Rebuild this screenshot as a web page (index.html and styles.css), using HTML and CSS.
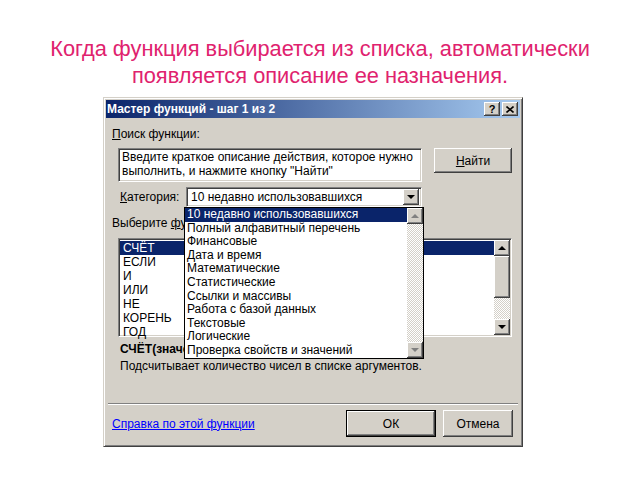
FILE: index.html
```html
<!DOCTYPE html>
<html lang="ru">
<head>
    <meta charset="UTF-8">
    <title>Мастер функций</title>
    <link rel="stylesheet" href="styles.css">
</head>
<body>
    <h1 class="caption">Когда функция выбирается из списка, автоматически<br>появляется описание ее назначения.</h1>

    <div class="dialog">
        <div class="titlebar">
            <span class="title">Мастер функций - шаг 1 из 2</span>
            <div class="tb-buttons">
                <span class="tb-btn tb-help">?</span>
                <span class="tb-btn">
                    <svg width="8" height="7" viewBox="0 0 8 7"><path d="M0.5 0.5 L7.5 6.5 M7.5 0.5 L0.5 6.5" stroke="#000" stroke-width="1.6"/></svg>
                </span>
            </div>
        </div>

        <div class="dlg-body">
            <div class="label"><u>П</u>оиск функции:</div>

            <div class="search-row">
                <div class="search-box field">Введите краткое описание действия, которое нужно<br>выполнить, и нажмите кнопку "Найти"</div>
                <button class="btn find-btn"><u>Н</u>айти</button>
            </div>

            <div class="category-row">
                <span class="cat-label"><u>К</u>атегория:</span>
                <div class="select field">
                    <span class="select-text">10 недавно использовавшихся</span>
                    <span class="sb-btn select-arrow"><i class="arrow-down"></i></span>
                </div>

                <!-- раскрытый список категорий -->
                <div class="dropdown">
                    <ul class="dd-items">
                        <li class="selected">10 недавно использовавшихся</li>
                        <li>Полный алфавитный перечень</li>
                        <li>Финансовые</li>
                        <li>Дата и время</li>
                        <li>Математические</li>
                        <li>Статистические</li>
                        <li>Ссылки и массивы</li>
                        <li>Работа с базой данных</li>
                        <li>Текстовые</li>
                        <li>Логические</li>
                        <li>Проверка свойств и значений</li>
                    </ul>
                    <div class="scrollbar">
                        <span class="sb-btn"><i class="arrow-up disabled"></i></span>
                        <span class="sb-track"></span>
                        <span class="sb-btn"><i class="arrow-down disabled"></i></span>
                    </div>
                </div>
            </div>

            <div class="label label-func">Выберите <u>ф</u>ункцию:</div>

            <div class="func-list field">
                <ul class="fl-items">
                    <li class="selected">СЧЁТ</li>
                    <li>ЕСЛИ</li>
                    <li>И</li>
                    <li>ИЛИ</li>
                    <li>НЕ</li>
                    <li>КОРЕНЬ</li>
                    <li>ГОД</li>
                </ul>
                <div class="scrollbar">
                    <span class="sb-btn"><i class="arrow-up"></i></span>
                    <span class="sb-thumb"></span>
                    <span class="sb-track"></span>
                    <span class="sb-btn"><i class="arrow-down"></i></span>
                </div>
            </div>

            <div class="signature">СЧЁТ(значение1;значение2;...)</div>
            <div class="description">Подсчитывает количество чисел в списке аргументов.</div>

            <div class="separator"></div>

            <div class="footer">
                <a class="help-link" href="#">Справка по этой функции</a>
                <button class="btn ok-btn">ОК</button>
                <button class="btn cancel-btn">Отмена</button>
            </div>
        </div>
    </div>
</body>
</html>
```

FILE: styles.css
```css
:root {
    --face: #d4d0c8;
    --shadow: #808080;
    --dark: #404040;
    --navy: #0a246a;
}

body {
    margin: 0;
    background: #fff;
    font-family: "Liberation Sans", Arial, sans-serif;
}

/* Подпись слайда */
.caption {
    margin: 0 0 8px;
    padding-top: 35px;
    text-align: center;
    font-weight: normal;
    font-size: 21.8px;
    line-height: 27px;
    color: #e0226e;
}

/* Окно диалога */
.dialog {
    margin-left: 103px;
    width: 420px;
    height: 350px;
    box-sizing: border-box;
    padding: 2px;
    background: var(--face);
    border: 1px solid;
    border-color: var(--face) var(--dark) var(--dark) var(--face);
    box-shadow: inset 1px 1px #fff, inset -1px -1px var(--shadow);
    font-size: 12px;
    color: #000;
}

.titlebar {
    height: 18px;
    display: flex;
    align-items: center;
    justify-content: space-between;
    padding: 0 2px 0 1px;
    background: linear-gradient(to right, var(--navy), #a6caf0);
}

.title {
    color: #fff;
    font-weight: bold;
    font-size: 12px;
}

.tb-buttons {
    display: flex;
    gap: 2px;
}

.tb-btn {
    width: 16px;
    height: 14px;
    display: flex;
    align-items: center;
    justify-content: center;
    background: var(--face);
    box-shadow: inset -1px -1px var(--dark), inset 1px 1px #fff, inset -2px -2px var(--shadow);
    font-size: 11px;
    font-weight: bold;
}

.dlg-body {
    padding: 10px 7px 0 6px;
}

.label {
    line-height: 13px;
}

/* Поля с вдавленной рамкой */
.field {
    box-sizing: border-box;
    background: #fff;
    border: 1px solid;
    border-color: var(--shadow) #fff #fff var(--shadow);
    box-shadow: inset 1px 1px var(--dark), inset -1px -1px var(--face);
}

.btn {
    box-sizing: border-box;
    background: var(--face);
    border: none;
    padding: 0;
    font-family: inherit;
    font-size: 12px;
    color: #000;
    box-shadow: inset -1px -1px var(--dark), inset 1px 1px #fff, inset -2px -2px var(--shadow);
}

.search-row {
    display: flex;
    align-items: flex-start;
    margin-top: 7px;
    padding-left: 6px;
}

.search-box {
    width: 304px;
    height: 34px;
    padding: 1px 3px;
    line-height: 14px;
}

.find-btn {
    width: 78px;
    height: 25px;
    margin-left: 12px;
}

.category-row {
    position: relative;
    display: flex;
    align-items: center;
    margin-top: 5px;
    height: 20px;
}

.cat-label {
    margin-left: 8px;
    width: 66px;
}

.select {
    width: 236px;
    height: 20px;
    display: flex;
    align-items: center;
    justify-content: space-between;
    padding: 2px;
}

.select-text {
    padding-left: 2px;
}

.select-arrow {
    height: 16px;
}

/* Раскрытый список */
.dropdown {
    position: absolute;
    left: 72px;
    top: 20px;
    width: 240px;
    height: 152px;
    box-sizing: border-box;
    display: flex;
    background: #fff;
    border: 1px solid #000;
    z-index: 2;
}

.dd-items,
.fl-items {
    flex: 1;
    margin: 0;
    padding: 0;
    list-style: none;
}

.dd-items li {
    line-height: 13.6px;
    padding-left: 2px;
    white-space: nowrap;
}

.selected {
    background: var(--navy);
    color: #fff;
}

.scrollbar {
    width: 16px;
    display: flex;
    flex-direction: column;
}

.sb-btn {
    width: 16px;
    height: 16px;
    flex-shrink: 0;
    display: flex;
    align-items: center;
    justify-content: center;
    background: var(--face);
    box-shadow: inset -1px -1px var(--dark), inset 1px 1px #fff, inset -2px -2px var(--shadow);
}

.sb-track {
    flex: 1;
    background: repeating-conic-gradient(#fff 0 25%, var(--face) 0 50%) 0 0 / 2px 2px;
}

.sb-thumb {
    height: 42px;
    flex-shrink: 0;
    background: var(--face);
    box-shadow: inset -1px -1px var(--dark), inset 1px 1px #fff, inset -2px -2px var(--shadow);
}

.arrow-down,
.arrow-up {
    width: 0;
    height: 0;
    border-left: 4px solid transparent;
    border-right: 4px solid transparent;
}

.arrow-down {
    border-top: 4px solid #000;
}

.arrow-up {
    border-bottom: 4px solid #000;
}

.arrow-down.disabled {
    border-top-color: var(--shadow);
}

.arrow-up.disabled {
    border-bottom-color: var(--shadow);
}

.label-func {
    margin-top: 10px;
}

.func-list {
    display: flex;
    margin: 8px 0 0 6px;
    width: 394px;
    height: 99px;
    padding: 1px;
}

.fl-items {
    padding-top: 1px;
}

.fl-items li {
    line-height: 14px;
    padding-left: 3px;
}

.signature {
    margin: 6px 0 0 8px;
    line-height: 13px;
    font-weight: bold;
}

.description {
    margin: 4px 0 0 8px;
    line-height: 13px;
}

.separator {
    margin: 30px 0 0 -4px;
    width: 410px;
    border-top: 1px solid var(--shadow);
    border-bottom: 1px solid #fff;
}

.footer {
    display: flex;
    align-items: center;
    margin-top: 5px;
    height: 27px;
}

.help-link {
    color: #0000ff;
}

.ok-btn {
    margin-left: auto;
    width: 90px;
    height: 27px;
    border: 1px solid #000;
}

.cancel-btn {
    margin-left: 7px;
    width: 70px;
    height: 27px;
}
```
